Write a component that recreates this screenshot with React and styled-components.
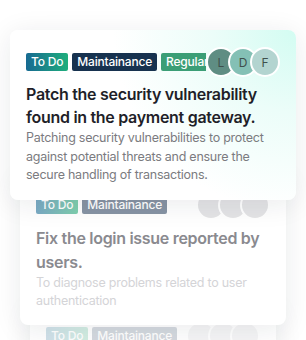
import React from "react";
import styled, { createGlobalStyle } from "styled-components";

const GlobalStyle = createGlobalStyle`
  html, body {
    margin: 0;
    padding: 0;
    background: #ffffff;
    overflow: hidden;
  }
  body {
    font-family: Inter, "Noto Sans", sans-serif;
    -webkit-font-smoothing: antialiased;
  }
`;

const Page = styled.div`
  width: 306px;
  height: 340px;
  overflow: hidden;
  padding-top: 30px;
  box-sizing: border-box;
`;

const Stack = styled.div`
  display: flex;
  flex-direction: column;
  align-items: center;
`;

const Card = styled.article`
  position: relative;
  z-index: ${({ $layer }) => $layer};
  width: ${({ $width }) => $width}px;
  margin-top: ${({ $overlap }) => $overlap}px;
  box-sizing: border-box;
  padding: 17px 16px ${({ $bottom }) => $bottom}px;
  border-radius: 8px;
  background: ${({ $glow }) =>
    $glow
      ? "radial-gradient(circle at 100% 0%, #d3fcf2 0%, #ecfdf9 25%, #ffffff 55%)"
      : "#ffffff"};
  box-shadow: 0 4px 28px rgba(20, 30, 40, 0.09);
`;

const Faded = styled.div`
  opacity: ${({ $amount }) => $amount};
`;

const TopRow = styled.div`
  display: flex;
  align-items: center;
  height: 30px;
`;

const Tags = styled.div`
  flex: 1;
  min-width: 0;
  display: flex;
  gap: 4px;
  overflow: hidden;
`;

const Tag = styled.span`
  flex: none;
  height: 18px;
  line-height: 18px;
  padding: 0 5px;
  border-radius: 2px;
  font-size: 12px;
  letter-spacing: -0.2px;
  font-weight: 500;
  color: #ffffff;
  background: ${({ $bg }) => $bg};
  white-space: nowrap;
`;

const Avatars = styled.div`
  flex: none;
  display: flex;
`;

const Avatar = styled.span`
  width: 26px;
  height: 26px;
  border-radius: 50%;
  border: 2px solid #ffffff;
  margin-left: ${({ $first }) => ($first ? 0 : -8)}px;
  background: ${({ $bg }) => $bg};
  color: #3f4f4c;
  display: flex;
  align-items: center;
  justify-content: center;
  font-size: 12px;
`;

const Title = styled.h2`
  margin: 6px 0 0;
  font-size: 16px;
  letter-spacing: -0.3px;
  line-height: ${({ $lh }) => $lh}px;
  font-weight: 600;
  color: ${({ $color }) => $color};
`;

const Description = styled.p`
  margin: 0;
  font-size: 12.5px;
  letter-spacing: -0.25px;
  line-height: 18.5px;
  color: ${({ $color }) => $color};
`;

const tagColors = {
  todo: "linear-gradient(90deg, #176a92 0%, #1fae7c 100%)",
  maint: "#17324f",
  regular: "#3b9e76",
};

const fadedTag = {
  todo: "linear-gradient(90deg, #7aaac4 0%, #7fcfae 100%)",
  maint: "#8794a4",
};

const TaskCard = ({ task, layer, width, overlap, bottom }) => (
  <Card
    $layer={layer}
    $width={width}
    $overlap={overlap}
    $bottom={bottom}
    $glow={task.glow}
  >
    <Faded $amount={task.opacity}>
      <TopRow>
        <Tags>
          {task.tags.map((t) => (
            <Tag key={t.label} $bg={t.bg}>
              {t.label}
            </Tag>
          ))}
        </Tags>
        <Avatars>
          {task.people.map((p, i) => (
            <Avatar key={i} $first={i === 0} $bg={p.bg}>
              {p.initial}
            </Avatar>
          ))}
        </Avatars>
      </TopRow>
      <Title $color={task.titleColor} $lh={task.titleLh}>
        {task.title}
      </Title>
      <Description $color={task.descColor}>{task.description}</Description>
    </Faded>
  </Card>
);

const tasks = [
  {
    glow: true,
    opacity: 1,
    titleLh: 23,
    titleColor: "#1f1f29",
    descColor: "#7b7b80",
    tags: [
      { label: "To Do", bg: tagColors.todo },
      { label: "Maintainance", bg: tagColors.maint },
      { label: "Regular", bg: tagColors.regular },
    ],
    people: [
      { initial: "L", bg: "#5f8d83" },
      { initial: "D", bg: "#84c0b5" },
      { initial: "F", bg: "#b3d4d0" },
    ],
    title: "Patch the security vulnerability found in the payment gateway.",
    description:
      "Patching security vulnerabilities to protect against potential threats and ensure the secure handling of transactions.",
  },
  {
    opacity: 1,
    titleLh: 24,
    titleColor: "#8a8a8f",
    descColor: "#d4d4d7",
    tags: [
      { label: "To Do", bg: fadedTag.todo },
      { label: "Maintainance", bg: fadedTag.maint },
    ],
    people: [
      { initial: "", bg: "#e4e4e6" },
      { initial: "", bg: "#e4e4e6" },
      { initial: "", bg: "#e4e4e6" },
    ],
    title: "Fix the login issue reported by users.",
    description: "To diagnose problems related to user authentication",
  },
  {
    opacity: 0.35,
    titleLh: 24,
    titleColor: "#8e8e92",
    descColor: "#d2d2d5",
    tags: [
      { label: "To Do", bg: fadedTag.todo },
      { label: "Maintainance", bg: fadedTag.maint },
    ],
    people: [
      { initial: "", bg: "#e4e4e6" },
      { initial: "", bg: "#e4e4e6" },
      { initial: "", bg: "#e4e4e6" },
    ],
    title: "Update the onboarding flow.",
    description: "Improve the first steps for new users",
  },
];

const layout = [
  { layer: 3, width: 286, overlap: 0, bottom: 15 },
  { layer: 2, width: 266, overlap: -27, bottom: 14 },
  { layer: 1, width: 246, overlap: -21, bottom: 15 },
];

export default function App() {
  return (
    <>
      <GlobalStyle />
      <Page>
        <Stack>
          {tasks.map((task, i) => (
            <TaskCard key={i} task={task} {...layout[i]} />
          ))}
        </Stack>
      </Page>
    </>
  );
}
